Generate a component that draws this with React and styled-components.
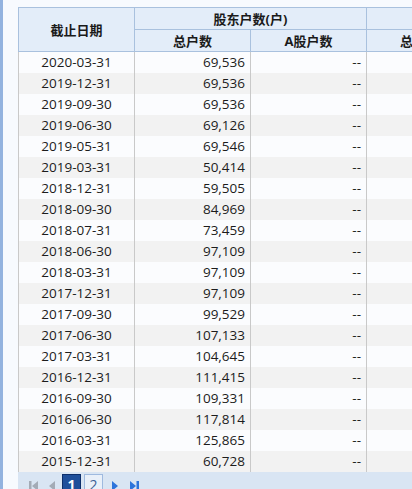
import React from "react";
import styled, { createGlobalStyle } from "styled-components";

const Global = createGlobalStyle`
  html, body { margin: 0; padding: 0; background: #f7fafe; }
  body { font-family: "Open Sans", "Noto Sans CJK SC", sans-serif; }
`;

const Page = styled.div`
  width: 412px;
  height: 489px;
  box-sizing: border-box;
  overflow: hidden;
  border-left: 3px solid #93b3df;
  background: #f7fafe;
  padding: 7px 0 0 15px;
`;

const Grid = styled.div`
  width: 560px;
  display: flex;
  flex-direction: column;
`;

const Table = styled.table`
  border-collapse: collapse;
  table-layout: fixed;
  width: 480px;
  font-size: 13.5px;
  color: #1c1c1c;
`;

const HeadCell = styled.th`
  background: #e3edf9;
  border: 1px solid #a9c1de;
  height: 21px;
  padding: 0;
  font-weight: 700;
  font-size: 13px;
  text-align: center;
  color: #1a1a1a;
  white-space: nowrap;
  overflow: hidden;
  line-height: 20px;
`;

const Row = styled.tr`
  background: ${(p) => (p.$odd ? "#f2f2f2" : "#fbfcfe")};
`;

const Cell = styled.td`
  height: 21px;
  padding: 0 5px;
  border-left: 1px solid #c9c9c9;
  border-right: 1px solid #c9c9c9;
  text-align: ${(p) => p.$align || "right"};
  white-space: nowrap;
  overflow: hidden;
  line-height: 21px;
`;

const Pager = styled.div`
  background: #d9e5f3;
  height: 30px;
  display: flex;
  align-items: flex-start;
  padding: 2px 0 0 6px;
`;

const IconBtn = styled.span`
  width: ${(p) => p.$w || 16}px;
  height: 18px;
  display: flex;
  align-items: center;
  justify-content: center;
  margin-top: 3px;
`;

const PageBox = styled.span`
  width: 17px;
  height: 18px;
  display: flex;
  align-items: center;
  justify-content: center;
  font-size: 14px;
  font-weight: ${(p) => (p.$active ? 700 : 400)};
  color: ${(p) => (p.$active ? "#ffffff" : "#3b5f95")};
  background: ${(p) => (p.$active ? "#1f4f9a" : "#e9f0f9")};
  border: 1px solid ${(p) => (p.$active ? "#0d2f6b" : "#9fbadf")};
  margin-left: ${(p) => p.$ml || 0}px;
`;

const data = [
  ["2020-03-31", "69,536"],
  ["2019-12-31", "69,536"],
  ["2019-09-30", "69,536"],
  ["2019-06-30", "69,126"],
  ["2019-05-31", "69,546"],
  ["2019-03-31", "50,414"],
  ["2018-12-31", "59,505"],
  ["2018-09-30", "84,969"],
  ["2018-07-31", "73,459"],
  ["2018-06-30", "97,109"],
  ["2018-03-31", "97,109"],
  ["2017-12-31", "97,109"],
  ["2017-09-30", "99,529"],
  ["2017-06-30", "107,133"],
  ["2017-03-31", "104,645"],
  ["2016-12-31", "111,415"],
  ["2016-09-30", "109,331"],
  ["2016-06-30", "117,814"],
  ["2016-03-31", "125,865"],
  ["2015-12-31", "60,728"],
];

const First = ({ c }) => (
  <svg width="12" height="12" viewBox="0 0 12 12">
    <rect x="1" y="1" width="2.5" height="10" fill={c} />
    <polygon points="10,1 4,6 10,11" fill={c} />
  </svg>
);
const Prev = ({ c }) => (
  <svg width="8" height="12" viewBox="0 0 8 12">
    <polygon points="7,1 1,6 7,11" fill={c} />
  </svg>
);
const Next = ({ c }) => (
  <svg width="8" height="12" viewBox="0 0 8 12">
    <polygon points="1,1 7,6 1,11" fill={c} />
  </svg>
);
const Last = ({ c }) => (
  <svg width="12" height="12" viewBox="0 0 12 12">
    <polygon points="2,1 8,6 2,11" fill={c} />
    <rect x="8.5" y="1" width="2.5" height="10" fill={c} />
  </svg>
);

export default function App() {
  return (
    <>
      <Global />
      <Page>
        <Grid>
          <Table>
            <colgroup>
              <col style={{ width: 116 }} />
              <col style={{ width: 116 }} />
              <col style={{ width: 116 }} />
              <col style={{ width: 132 }} />
            </colgroup>
            <thead>
              <tr>
                <HeadCell rowSpan={2}>截止日期</HeadCell>
                <HeadCell colSpan={2}>股东户数(户)</HeadCell>
                <HeadCell></HeadCell>
              </tr>
              <tr>
                <HeadCell>总户数</HeadCell>
                <HeadCell>A股户数</HeadCell>
                <HeadCell>总户数变化</HeadCell>
              </tr>
            </thead>
            <tbody>
              {data.map(([d, n], i) => (
                <Row key={d} $odd={i % 2 === 1}>
                  <Cell $align="center">{d}</Cell>
                  <Cell>{n}</Cell>
                  <Cell>--</Cell>
                  <Cell></Cell>
                </Row>
              ))}
            </tbody>
          </Table>
          <Pager>
            <IconBtn $w={20}><First c="#a3abb6" /></IconBtn>
            <IconBtn $w={16}><Prev c="#a3abb6" /></IconBtn>
            <PageBox $active $ml={2}>1</PageBox>
            <PageBox $ml={3}>2</PageBox>
            <IconBtn $w={24}><Next c="#2d74db" /></IconBtn>
            <IconBtn $w={14}><Last c="#2d74db" /></IconBtn>
          </Pager>
        </Grid>
      </Page>
    </>
  );
}
